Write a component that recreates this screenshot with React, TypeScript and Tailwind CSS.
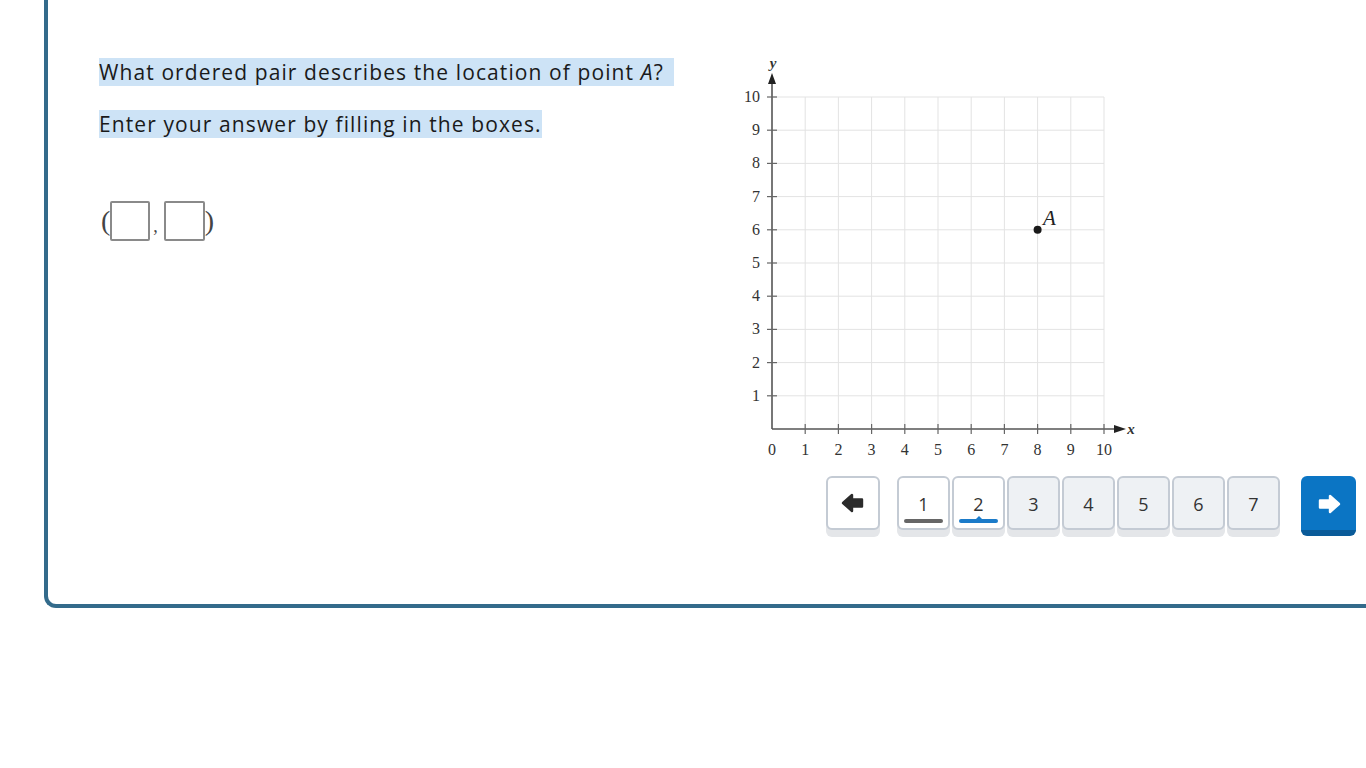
const U = 33.2;
const OX = 42;
const OY = 379;

function Graph() {
  const steps = Array.from({ length: 10 }, (_, i) => i + 1);
  return (
    <svg width="420" height="420" viewBox="0 0 420 420" className="block">
      {steps.map((i) => (
        <g key={i} stroke="#e3e3e3" strokeWidth="1">
          <line x1={OX + i * U} y1={OY - 10 * U} x2={OX + i * U} y2={OY} />
          <line x1={OX} y1={OY - i * U} x2={OX + 10 * U} y2={OY - i * U} />
        </g>
      ))}
      {/* axes */}
      <line x1={OX} y1={OY} x2={OX} y2={26} stroke="#555" strokeWidth="1.6" />
      <line x1={OX} y1={OY} x2={392} y2={OY} stroke="#555" strokeWidth="1.6" />
      <polygon points={`${OX - 4},${34} ${OX},${23} ${OX + 4},${34}`} fill="#222" />
      <polygon points={`${384},${OY - 4} ${396},${OY} ${384},${OY + 4}`} fill="#222" />
      {steps.map((i) => (
        <g key={"t" + i} stroke="#666" strokeWidth="1.2">
          <line x1={OX - 5} y1={OY - i * U} x2={OX + 5} y2={OY - i * U} />
          <line x1={OX + i * U} y1={OY - 5} x2={OX + i * U} y2={OY + 5} />
        </g>
      ))}
      <g fontFamily="'Liberation Serif', serif" fontSize="16" fill="#333">
        {steps.map((i) => (
          <text key={"y" + i} x={30} y={OY - i * U + 5} textAnchor="end">
            {i}
          </text>
        ))}
        {[0, ...steps].map((i) => (
          <text key={"x" + i} x={OX + i * U} y={405} textAnchor="middle">
            {i}
          </text>
        ))}
      </g>
      <text x={43} y={18} textAnchor="middle" fontFamily="'Liberation Serif', serif" fontStyle="italic" fontWeight="bold" fontSize="15" fill="#333">
        y
      </text>
      <text x={401} y={384} textAnchor="middle" fontFamily="'Liberation Serif', serif" fontStyle="italic" fontWeight="bold" fontSize="15" fill="#333">
        x
      </text>
      <circle cx={OX + 8 * U} cy={OY - 6 * U} r="4" fill="#1a1a1a" />
      <text x={313} y={175} fontFamily="'Liberation Serif', serif" fontStyle="italic" fontSize="21" fill="#222">
        A
      </text>
    </svg>
  );
}

// chunky arrow, drawn pointing left; flip for right
function Arrow({ color, flip }: { color: string; flip?: boolean }) {
  return (
    <svg width="24" height="20" viewBox="0 0 24 20" className={flip ? "-scale-x-100" : ""}>
      <path
        d="M2 10 L11 2 L11 6.5 L21 6.5 L21 13.5 L11 13.5 L11 18 Z"
        fill={color}
        stroke={color}
        strokeWidth="2.4"
        strokeLinejoin="round"
      />
    </svg>
  );
}

function NumButton({ n, state }: { n: number; state: "seen" | "current" | "todo" }) {
  return (
    <button
      className={
        "relative w-[53px] h-[54px] rounded-[6px] border-2 border-[#c4cbd4] shadow-[0_7px_0_#e4e6e9] text-[18px] text-[#333] flex justify-center pt-[13px] " +
        (state === "todo" ? "bg-[#eef1f4]" : "bg-white")
      }
      style={{ fontFamily: "'Open Sans', sans-serif" }}
    >
      {n}
      {state === "seen" && (
        <span className="absolute left-[5px] right-[5px] bottom-[5px] h-[4px] rounded-full bg-[#666]" />
      )}
      {state === "current" && (
        <>
          <span className="absolute left-[5px] right-[5px] bottom-[5px] h-[4px] rounded-full bg-[#1b7bc9]" />
          <span className="absolute left-1/2 -translate-x-1/2 bottom-[8px] w-0 h-0 border-l-[4px] border-r-[4px] border-b-[4px] border-l-transparent border-r-transparent border-b-[#1b7bc9]" />
        </>
      )}
    </button>
  );
}

export default function App() {
  return (
    <div className="w-[1366px] h-[768px] bg-white overflow-hidden">
      <div className="ml-[44px] w-[1400px] h-[608px] border-l-4 border-b-4 border-[#336b8b] rounded-bl-[12px] flex">
        <div className="pl-[51px] pt-[57px] w-[682px] shrink-0 text-[#1a1a1a]" style={{ fontFamily: "'Open Sans', sans-serif" }}>
          <p className="text-[21px] leading-[31px] tracking-[1.1px]">
            <span className="bg-[#cde3f6] pr-[10px]">
              What ordered pair describes the location of point <i>A</i>?
            </span>
          </p>
          <p className="mt-[20px] text-[21px] leading-[33px] tracking-[1.1px]">
            <span className="bg-[#cde3f6]">Enter your answer by filling in the boxes.</span>
          </p>
          <div className="mt-[60px] flex items-center text-[28px] text-[#444]" style={{ fontFamily: "'Liberation Serif', serif" }}>
            <span className="ml-[2px] leading-none font-light">(</span>
            <span className="w-[40px] h-[40px] border-2 border-[#8a8a8a] rounded-[2px] bg-white" />
            <span className="text-[18px] mx-[3px] mt-[10px] leading-none">,</span>
            <span className="ml-[3px] w-[41px] h-[40px] border-2 border-[#8a8a8a] rounded-[2px] bg-white" />
            <span className="leading-none font-light">)</span>
          </div>
        </div>
        <div className="pt-[50px]">
          <Graph />
          <div className="mt-[6px] ml-[96px] flex items-start">
            <button className="w-[54px] h-[54px] rounded-[6px] border-2 border-[#c4cbd4] bg-white shadow-[0_7px_0_#e4e6e9] flex items-center justify-center">
              <Arrow color="#2b2b2b" />
            </button>
            <div className="ml-[17px] flex gap-[2px]">
              <NumButton n={1} state="seen" />
              <NumButton n={2} state="current" />
              {[3, 4, 5, 6, 7].map((n) => (
                <NumButton key={n} n={n} state="todo" />
              ))}
            </div>
            <button className="ml-[21px] w-[55px] h-[60px] rounded-[6px] bg-[#0b75c4] border-b-[6px] border-[#0a5b99] flex items-center justify-center pt-[2px]">
              <Arrow color="#ffffff" flip />
            </button>
          </div>
        </div>
      </div>
    </div>
  );
}
